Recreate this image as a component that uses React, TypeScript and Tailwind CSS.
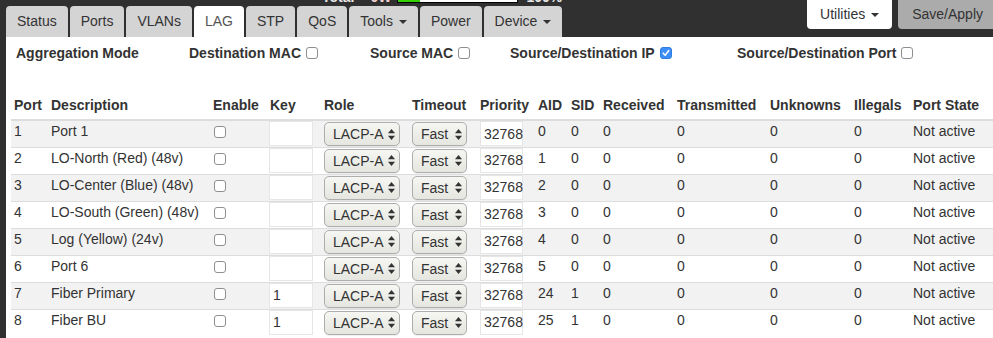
const TABS = ['Status', 'Ports', 'VLANs', 'LAG', 'STP', 'QoS', 'Tools', 'Power', 'Device']
const DROPDOWN_TABS = ['Tools', 'Device']

const ROWS = [
  { port: 1, desc: 'Port 1', key: '', aid: 0, sid: 0 },
  { port: 2, desc: 'LO-North (Red) (48v)', key: '', aid: 1, sid: 0 },
  { port: 3, desc: 'LO-Center (Blue) (48v)', key: '', aid: 2, sid: 0 },
  { port: 4, desc: 'LO-South (Green) (48v)', key: '', aid: 3, sid: 0 },
  { port: 5, desc: 'Log (Yellow) (24v)', key: '', aid: 4, sid: 0 },
  { port: 6, desc: 'Port 6', key: '', aid: 5, sid: 0 },
  { port: 7, desc: 'Fiber Primary', key: '1', aid: 24, sid: 1 },
  { port: 8, desc: 'Fiber BU', key: '1', aid: 25, sid: 1 },
]

const COLS = [
  { label: 'Port', w: 'w-[37px]' },
  { label: 'Description', w: 'w-[162px]' },
  { label: 'Enable', w: 'w-[57px]' },
  { label: 'Key', w: 'w-[54px]' },
  { label: 'Role', w: 'w-[88px]' },
  { label: 'Timeout', w: 'w-[68px]' },
  { label: 'Priority', w: 'w-[58px]' },
  { label: 'AID', w: 'w-[33px]' },
  { label: 'SID', w: 'w-[32px]' },
  { label: 'Received', w: 'w-[74px]' },
  { label: 'Transmitted', w: 'w-[93px]' },
  { label: 'Unknowns', w: 'w-[84px]' },
  { label: 'Illegals', w: 'w-[59px]' },
  { label: 'Port State', w: 'w-[83px]' },
]

function Caret() {
  return (
    <span className="ml-[6px] inline-block h-0 w-0 border-x-[4px] border-t-[4px] border-x-transparent border-t-[#333] align-middle" />
  )
}

function Checkbox({ checked = false }: { checked?: boolean }) {
  if (checked) {
    return (
      <span className="inline-flex h-[12px] w-[12px] items-center justify-center rounded-[3px] border border-[#2f7de0] bg-[#3d8ef8]">
        <svg width="10" height="10" viewBox="0 0 10 10">
          <path d="M2.2 5.2 L4.2 7.2 L7.8 2.6" fill="none" stroke="#fff" strokeWidth="1.6" strokeLinecap="round" strokeLinejoin="round" />
        </svg>
      </span>
    )
  }
  return <span className="inline-block h-[12px] w-[12px] rounded-[3px] border border-[#8f8f8f] bg-white" />
}

function UpDown() {
  return (
    <svg width="7" height="11" viewBox="0 0 7 11">
      <polygon points="0,4.2 3.5,0 7,4.2" fill="#333" />
      <polygon points="0,6.8 3.5,11 7,6.8" fill="#333" />
    </svg>
  )
}

function FakeSelect({ value, width }: { value: string; width: string }) {
  return (
    <div
      className={`mt-[1px] flex h-[24px] ${width} items-center justify-between rounded-[5px] border border-[#adadad] bg-gradient-to-b from-[#f6f6f2] to-[#e6e6e0] pl-[8px] pr-[4px] leading-none shadow-[0_1px_0_rgba(0,0,0,0.06)]`}
    >
      <span>{value}</span>
      <UpDown />
    </div>
  )
}

function TextBox({ value, width }: { value: string; width: string }) {
  return (
    <div className={`flex h-[25px] ${width} items-center border border-[#e6e6e6] bg-white pl-[3px] leading-none`}>
      {value}
    </div>
  )
}

export default function App() {
  return (
    <div className="h-[338px] w-full overflow-hidden bg-[#303030] font-['Liberation_Sans',Arial,sans-serif] text-[14px] text-[#333]">
      {/* Top bar */}
      <div className="flex h-[37px] justify-between">
        <div className="flex flex-col pl-[6px]">
          {/* status line, scrolled mostly out of view */}
          <div className="h-[6px] overflow-hidden">
            <div className="-mt-[10px] ml-[316px] flex h-[14px] items-end text-[14px] font-bold leading-[14px] text-[#e8e8e8]">
              <span>Total</span>
              <span className="ml-[16px] text-[#f0d0d0]">0W</span>
              <div className="mb-[1px] ml-[6px] flex h-[12px] w-[121px] border border-black bg-white">
                <div className="h-full w-[22px] bg-[#33d100]" />
              </div>
              <span className="ml-[8px]">100%</span>
            </div>
          </div>
          <div className="flex h-[31px] gap-[2px]">
            {TABS.map((t) => (
              <div
                key={t}
                className={`flex items-center rounded-t-[4px] px-[11px] ${
                  t === 'LAG' ? 'bg-white text-[#555]' : 'bg-[#d4d4d4] text-[#333]'
                }`}
              >
                {t}
                {DROPDOWN_TABS.includes(t) && <Caret />}
              </div>
            ))}
          </div>
        </div>
        <div className="flex items-start gap-[6px]">
          <div className="flex h-[29px] items-center rounded-b-[4px] bg-white px-[13px]">
            Utilities
            <Caret />
          </div>
          <div className="flex h-[29px] items-center rounded-bl-[4px] bg-[#ababab] pl-[14px] pr-[10px]">Save/Apply</div>
        </div>
      </div>

      {/* Content panel */}
      <div className="ml-[6px] h-[301px] bg-white">
        <div className="flex h-[20px] items-center pl-[10px] pt-[12px] font-bold leading-[20px]">
          <div className="w-[173px]">Aggregation Mode</div>
          <div className="flex w-[181px] items-center">
            Destination MAC
            <span className="ml-[5px] flex">
              <Checkbox />
            </span>
          </div>
          <div className="flex w-[140px] items-center">
            Source MAC
            <span className="ml-[5px] flex">
              <Checkbox />
            </span>
          </div>
          <div className="flex w-[227px] items-center">
            Source/Destination IP
            <span className="ml-[5px] flex">
              <Checkbox checked />
            </span>
          </div>
          <div className="flex items-center">
            Source/Destination Port
            <span className="ml-[5px] flex">
              <Checkbox />
            </span>
          </div>
        </div>

        <table className="ml-[5px] mt-[36px] w-[982px] table-fixed border-collapse">
          <colgroup>
            {COLS.map((c) => (
              <col key={c.label} className={c.w} />
            ))}
          </colgroup>
          <thead>
            <tr>
              {COLS.map((c) => (
                <th
                  key={c.label}
                  className="whitespace-nowrap border-b-2 border-[#dddddd] pb-[4px] pl-[3px] pt-[2px] text-left font-bold leading-[20px]"
                >
                  {c.label}
                </th>
              ))}
            </tr>
          </thead>
          <tbody>
            {ROWS.map((r, i) => {
              const td = `h-[27px] p-0 pl-[3px] align-top leading-[20px] whitespace-nowrap ${
                i > 0 ? 'border-t border-[#dddddd]' : ''
              }`
              return (
                <tr key={r.port} className={i % 2 === 0 ? 'bg-[#f2f2f2]' : 'bg-white'}>
                  <td className={td}>{r.port}</td>
                  <td className={td}>{r.desc}</td>
                  <td className={td}>
                    <span className="ml-[1px] mt-[5px] flex">
                      <Checkbox />
                    </span>
                  </td>
                  <td className={`${td} !pl-[2px]`}>
                    <TextBox value={r.key} width="w-[44px]" />
                  </td>
                  <td className={td}>
                    <FakeSelect value="LACP-A" width="w-[76px]" />
                  </td>
                  <td className={td}>
                    <FakeSelect value="Fast" width="w-[55px]" />
                  </td>
                  <td className={td}>
                    <TextBox value="32768" width="w-[43px]" />
                  </td>
                  <td className={td}>{r.aid}</td>
                  <td className={td}>{r.sid}</td>
                  <td className={td}>0</td>
                  <td className={td}>0</td>
                  <td className={td}>0</td>
                  <td className={td}>0</td>
                  <td className={td}>Not active</td>
                </tr>
              )
            })}
          </tbody>
        </table>
      </div>
    </div>
  )
}
